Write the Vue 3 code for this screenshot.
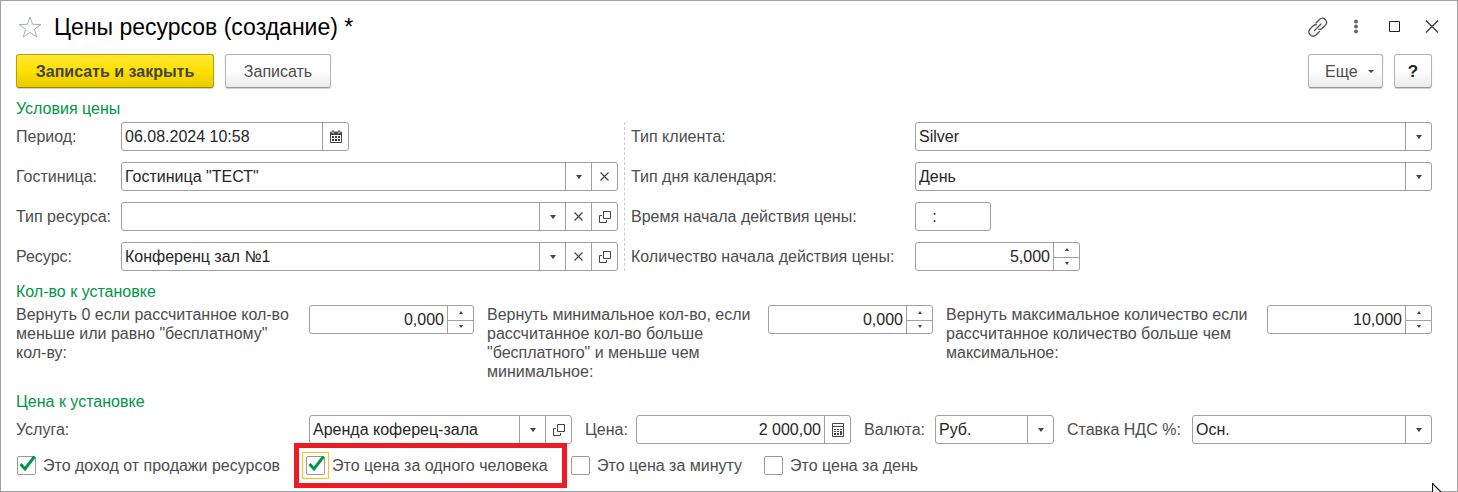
<script setup>
import { ref, reactive } from 'vue'

const lookups = reactive([
  { id: 'hotel', label: 'Гостиница:', value: 'Гостиница "ТЕСТ"', open: false },
  { id: 'kind', label: 'Тип ресурса:', value: '', open: true },
  { id: 'resource', label: 'Ресурс:', value: 'Конференц зал №1', open: true },
])

const period = ref('06.08.2024 10:58')
const startTime = ref('   :')
const start = reactive({ value: '5,000' })
const price = ref('2 000,00')

const clientSelects = [
  { id: 'client', label: 'Тип клиента:', value: 'Silver' },
  { id: 'day', label: 'Тип дня календаря:', value: 'День' },
]

const limits = reactive([
  { id: 'zero', label: 'Вернуть 0 если рассчитанное кол-во\nменьше или равно "бесплатному"\nкол-ву:', value: '0,000' },
  { id: 'min', label: 'Вернуть минимальное кол-во, если\nрассчитанное кол-во больше\n"бесплатного" и меньше чем\nминимальное:', value: '0,000' },
  { id: 'max', label: 'Вернуть максимальное количество если\nрассчитанное количество больше чем\nмаксимальное:', value: '10,000' },
])

const flags = reactive([
  { id: 'income', label: 'Это доход от продажи ресурсов', on: true, marked: false },
  { id: 'person', label: 'Это цена за одного человека', on: true, marked: true },
  { id: 'minute', label: 'Это цена за минуту', on: false, marked: false },
  { id: 'perday', label: 'Это цена за день', on: false, marked: false },
])

function step(target, delta) {
  const n = parseFloat(target.value.replace(',', '.')) + delta
  target.value = n.toFixed(3).replace('.', ',')
}
</script>

<template>
  <main class="window">
    <header class="titlebar">
      <button class="plain star" type="button" aria-label="Избранное">
        <svg width="24" height="22" viewBox="0 0 24 22"><path d="M12 1l2.600 7.300 8.400.2-6.600 4.800 2.400 7.700-6.800-4.600L5.200 21l2.400-7.700L1 8.500l8.400-.2z" fill="none" stroke="#a9afb8" /></svg>
      </button>
      <h1>Цены ресурсов (создание) *</h1>
      <div class="window-tools">
        <button class="plain" type="button" aria-label="Ссылка">
          <svg width="20" height="20" viewBox="0 0 20 20" fill="none" stroke="#555" stroke-width="1.300" stroke-linecap="round"><path d="M8 6l3.500-3.500c3.500-3.500 9.500 1.500 6 5.500L14 11.500c-1 1-2.200 1-3.200.6M5.500 8.500L2 12c-3.500 4 2 9.500 6 6l3.500-3.500M6.500 13.500l6.500-6.500M5.500 8.500c1-.8 2-.9 3-.6" /></svg>
        </button>
        <button class="plain" type="button" aria-label="Меню">
          <svg width="20" height="20" viewBox="0 0 20 20" fill="#666"><circle cx="10" cy="4.500" r="2" /><circle cx="10" cy="9.500" r="2" /><circle cx="10" cy="14.500" r="2" /></svg>
        </button>
        <button class="plain" type="button" aria-label="Развернуть">
          <svg width="20" height="20" viewBox="0 0 20 20"><path d="M5.500 4.500h10v10h-10z" fill="none" stroke="#222" /></svg>
        </button>
        <button class="plain" type="button" aria-label="Закрыть">
          <svg width="20" height="20" viewBox="0 0 20 20"><path d="M4 3.500l12 12M16 3.500l-12 12" stroke="#333" stroke-width="1.200" /></svg>
        </button>
      </div>
    </header>

    <div class="commands">
      <button class="btn primary" type="button">Записать и закрыть</button>
      <button class="btn save" type="button">Записать</button>
      <button class="btn more" type="button">Еще <i class="tri"></i></button>
      <button class="btn help" type="button">?</button>
    </div>

    <section>
      <h2>Условия цены</h2>
      <div class="columns">
        <div class="rows left">
          <div class="row">
            <label for="period">Период:</label>
            <div class="field date">
              <input id="period" v-model="period" type="text" />
              <button class="cell" type="button" aria-label="Календарь">
                <svg width="12" height="13" viewBox="0 0 12 13"><path d="M1 1.500h10q1 0 1 1V12q0 1-1 1H1q-1 0-1-1V2.500q0-1 1-1z" fill="#444" /><path d="M1 5h10v7H1z" fill="#fff" /><path d="M2 0h2v3H2zM8 0h2v3H8z" fill="#444" stroke="#fff" stroke-width=".5" /><path d="M2 6h2v2H2zM5 6h2v2H5zM8 6h2v2H8zM2 9h2v2H2zM5 9h2v2H5zM8 9h2v2H8z" fill="#444" /></svg>
              </button>
            </div>
          </div>
          <div v-for="item in lookups" :key="item.id" class="row">
            <label :for="item.id">{{ item.label }}</label>
            <div class="field">
              <div class="pick">
                <select :id="item.id" v-model="item.value">
                  <option value=""></option>
                  <option v-if="item.value">{{ item.value }}</option>
                </select>
                <span class="cell"><i class="tri"></i></span>
              </div>
              <button class="cell" type="button" aria-label="Очистить" @click="item.value = ''">
                <svg width="9" height="9" viewBox="0 0 9 9"><path d="M.5.5l8 8M8.500.5l-8 8" stroke="#444" stroke-width="1.200" /></svg>
              </button>
              <button v-if="item.open" class="cell" type="button" aria-label="Открыть">
                <svg width="12" height="12" viewBox="0 0 12 12" fill="none" stroke="#444"><path d="M4.500.5h7v7h-7zM3 4.500H.5v7h7V9" /></svg>
              </button>
            </div>
          </div>
        </div>

        <div class="rows right">
          <div v-for="item in clientSelects" :key="item.id" class="row">
            <label :for="item.id">{{ item.label }}</label>
            <div class="field">
              <div class="pick">
                <select :id="item.id"><option>{{ item.value }}</option></select>
                <span class="cell"><i class="tri"></i></span>
              </div>
            </div>
          </div>
          <div class="row">
            <label for="start-time">Время начала действия цены:</label>
            <div class="field time"><input id="start-time" v-model="startTime" type="text" /></div>
          </div>
          <div class="row">
            <label for="start-count">Количество начала действия цены:</label>
            <div class="field number">
              <input id="start-count" v-model="start.value" type="text" />
              <div class="spin">
                <button type="button" aria-label="Больше" @click="step(start, 1)"><i class="up"></i></button>
                <button type="button" aria-label="Меньше" @click="step(start, -1)"><i class="down"></i></button>
              </div>
            </div>
          </div>
        </div>
      </div>
    </section>

    <section>
      <h2>Кол-во к установке</h2>
      <div class="limits">
        <div v-for="item in limits" :key="item.id" class="limit">
          <label :for="item.id">{{ item.label }}</label>
          <div class="field number">
            <input :id="item.id" v-model="item.value" type="text" />
            <div class="spin">
              <button type="button" aria-label="Больше" @click="step(item, 1)"><i class="up"></i></button>
              <button type="button" aria-label="Меньше" @click="step(item, -1)"><i class="down"></i></button>
            </div>
          </div>
        </div>
      </div>
    </section>

    <section>
      <h2>Цена к установке</h2>
      <div class="price">
        <label for="service">Услуга:</label>
        <div class="field">
          <div class="pick">
            <select id="service"><option>Аренда коферец-зала</option></select>
            <span class="cell"><i class="tri"></i></span>
          </div>
          <button class="cell" type="button" aria-label="Открыть">
            <svg width="12" height="12" viewBox="0 0 12 12" fill="none" stroke="#444"><path d="M4.500.5h7v7h-7zM3 4.500H.5v7h7V9" /></svg>
          </button>
        </div>
        <label for="price">Цена:</label>
        <div class="field amount">
          <input id="price" v-model="price" type="text" />
          <button class="cell" type="button" aria-label="Калькулятор">
            <svg width="12" height="14" viewBox="0 0 12 14"><path d="M.5.5h11v13H.5z" fill="none" stroke="#444" /><path d="M1 3h10v1H1zM2 6h2v1H2zM5 6h2v1H5zM8 6h2v1H8zM2 8h2v1H2zM5 8h2v1H5zM8 8h2v4H8zM2 10h2v2H2zM5 10h2v2H5z" fill="#444" /></svg>
          </button>
        </div>
        <label for="currency">Валюта:</label>
        <div class="field">
          <div class="pick">
            <select id="currency"><option>Руб.</option></select>
            <span class="cell"><i class="tri"></i></span>
          </div>
        </div>
        <label for="vat">Ставка НДС %:</label>
        <div class="field">
          <div class="pick">
            <select id="vat"><option>Осн.</option></select>
            <span class="cell"><i class="tri"></i></span>
          </div>
        </div>
      </div>
    </section>

    <div class="flags">
      <label v-for="flag in flags" :key="flag.id" class="flag" :class="{ marked: flag.marked }">
        <span class="box">
          <input v-model="flag.on" type="checkbox" />
          <svg v-if="flag.on" width="19" height="19" viewBox="0 0 19 19"><path d="M3.500 8l4.500 5L17.500 0.500" fill="none" stroke="#009646" stroke-width="3" /></svg>
        </span>
        <span>{{ flag.label }}</span>
      </label>
    </div>

    <svg class="pointer" width="14" height="9" viewBox="0 0 14 9" aria-hidden="true"><path d="M.5 9V.5L9 9" fill="#fff" stroke="#111" stroke-width="1.200" /></svg>
  </main>
</template>

<style>
body {
  background: #fff;
}
</style>

<style scoped>
.window {
  position: relative;
  box-sizing: border-box;
  min-height: 100vh;
  padding: 8px 25px 11px 15px;
  border: 1px solid #a0a0a0;
  font: 16px/19px "Liberation Sans", Arial, sans-serif;
  color: #4d4d4d;
}
button, input, select {
  box-sizing: border-box;
  margin: 0;
  padding: 0;
  border: 0;
  border-radius: 0;
  background: none;
  font: inherit;
  color: inherit;
  outline: 0;
}
.titlebar {
  display: flex;
  align-items: center;
  height: 36px;
}
.plain {
  display: flex;
}
.star {
  margin: 0 12px 0 2px;
}
h1 {
  margin: 0;
  font-size: 23px;
  line-height: 28px;
  font-weight: 400;
  color: #000;
}
.window-tools {
  display: flex;
  gap: 18px;
  margin: 0 -10px 0 auto;
}
.commands {
  display: flex;
  gap: 11px;
  margin-top: 9px;
}
.btn {
  height: 34px;
  border: 1px solid #b3b3b3;
  border-bottom-color: #999;
  border-radius: 3px;
  background: linear-gradient(#fff 50%, #ebebeb);
  box-shadow: 0 1px 1px #ccc;
}
.primary {
  width: 198px;
  border-color: #b9a000;
  border-bottom-color: #9a8600;
  background: linear-gradient(#ffe838, #fee000 50%, #ebcb00);
  font-weight: 700;
  color: #444;
}
.save {
  width: 106px;
}
.more {
  display: flex;
  align-items: center;
  justify-content: space-between;
  width: 75px;
  margin-left: auto;
  padding: 0 8px 0 16px;
}
.help {
  width: 38px;
  font-size: 17px;
  font-weight: 700;
  color: #222;
}
.tri {
  border: 3px solid transparent;
  border-top: 4px solid #444;
  border-bottom: 0;
}
.more .tri {
  border-top-width: 3px;
}
h2 {
  margin: 0 0 4px;
  font-size: 16px;
  line-height: 19px;
  font-weight: 400;
  color: #009646;
}
section {
  margin-top: 11px;
}
.columns {
  display: grid;
  grid-template-columns: 76fr 101fr;
}
.rows {
  display: grid;
  gap: 11px;
}
.left {
  padding-right: 6px;
}
.right {
  padding-left: 6px;
  border-left: 1px dashed #ccc;
}
.row {
  display: flex;
  align-items: center;
}
.row label {
  flex: none;
  white-space: nowrap;
}
.left .row label {
  width: 105px;
}
.right .row label {
  width: 284px;
}
.field {
  display: flex;
  flex: 1;
  box-sizing: border-box;
  min-width: 0;
  height: 29px;
  border: 1px solid #a0a0a0;
  border-radius: 3px;
  background: #fff;
  color: #262626;
}
.field input {
  flex: 1;
  width: 0;
  min-width: 0;
  padding: 0 3px;
}
.date {
  flex: 0 0 228px;
}
.time {
  flex: 0 0 76px;
}
.number {
  flex: 0 0 165px;
}
.number input, .amount input {
  text-align: right;
}
.cell {
  display: flex;
  flex: none;
  box-sizing: border-box;
  align-items: center;
  justify-content: center;
  width: 26px;
  border-left: 1px solid #a0a0a0;
}
.pick {
  display: grid;
  flex: 1;
  min-width: 0;
}
.pick select {
  grid-area: 1 / 1;
  appearance: none;
  width: 100%;
  min-width: 0;
  padding: 0 29px 0 3px;
}
.pick .cell {
  grid-area: 1 / 1;
  justify-self: end;
  pointer-events: none;
}
.spin {
  display: grid;
  box-sizing: border-box;
  grid-template-rows: 1fr 1fr;
  width: 26px;
  border-left: 1px solid #a0a0a0;
}
.spin button {
  display: flex;
  align-items: center;
  justify-content: center;
}
.spin button + button {
  border-top: 1px solid #a0a0a0;
}
.up, .down {
  border: 2px solid transparent;
}
.up {
  border-top: 0;
  border-bottom: 3px solid #444;
}
.down {
  border-bottom: 0;
  border-top: 3px solid #444;
}
.limits {
  display: grid;
  grid-template-columns: 458fr 446fr 486fr;
  gap: 13px;
}
.limit {
  display: flex;
}
.limit label {
  flex: 1;
  white-space: pre;
}
.price {
  display: grid;
  grid-template-columns: 293px 263fr 64px 215fr 84px 119fr 138px 240fr;
  align-items: center;
}
.price label {
  white-space: nowrap;
}
.price .field + label {
  padding-left: 13px;
}
.flags {
  display: grid;
  grid-template-columns: 289px 265px 193px auto;
  margin: 12px 0 0 1px;
}
.flag {
  position: relative;
  display: flex;
  gap: 7px;
  white-space: nowrap;
}
.box {
  position: relative;
  width: 19px;
  height: 19px;
}
.box input {
  display: block;
  appearance: none;
  width: 19px;
  height: 19px;
  border: 1px solid #999;
  border-radius: 2px;
  background: #fff;
}
.box svg {
  position: absolute;
  inset: 0;
}
.marked::before {
  content: "";
  position: absolute;
  inset: -13px 4px -13px -12px;
  border: 5px solid #ed1c24;
}
.marked .box::before {
  content: "";
  position: absolute;
  inset: -4px;
  border: 1px solid #f5c518;
}
.pointer {
  position: absolute;
  right: 11px;
  bottom: -1px;
}
</style>
